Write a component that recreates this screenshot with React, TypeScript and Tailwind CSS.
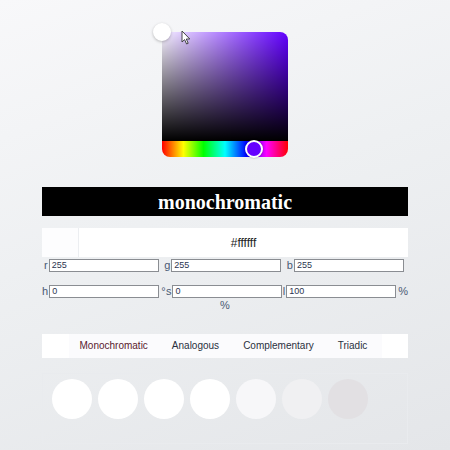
import React from 'react';

const swatches = ['#ffffff', '#ffffff', '#ffffff', '#ffffff', '#f7f7f9', '#f0f0f2', '#e2e0e3'];
const tabs = ['Monochromatic', 'Analogous', 'Complementary', 'Triadic'];

function Field({ label, value, suffix, className }: { label: string; value: string; suffix?: string; className?: string }) {
  return (
    <div className={`flex items-center ${className ?? ''}`}>
      <span className="text-[11px] leading-none text-[#4a5a74]">{label}</span>
      <div className="ml-px h-[13px] w-[110px] border border-[#8a8d92] bg-white px-0.5 text-[9px] leading-[11px] text-[#2b3550]">
        {value}
      </div>
      {suffix && <span className="ml-0.5 text-[11px] leading-none text-[#4a5a74]">{suffix}</span>}
    </div>
  );
}

export default function App() {
  return (
    <div
      className="flex min-h-screen flex-col items-center bg-[linear-gradient(160deg,#f8f8fa_0%,#eef0f2_45%,#e4e6e9_100%)] pt-8"
      style={{ fontFamily: '"Liberation Sans", Arial, sans-serif' }}
    >
      {/* picker */}
      <div className="relative h-[125px] w-[126px]">
        <div className="h-[109px] w-full rounded-t-lg bg-[#6200ff]">
          <div className="h-full w-full rounded-t-lg bg-[linear-gradient(to_right,rgba(255,255,255,0.95),rgba(255,255,255,0))]">
            <div className="h-full w-full rounded-t-lg bg-[linear-gradient(to_bottom,rgba(0,0,0,0)_0%,rgba(0,0,0,0.5)_50%,#000000_100%)]" />
          </div>
        </div>
        <div className="h-4 w-full rounded-b-lg bg-[linear-gradient(to_right,#ff0000_0%,#ffff00_17%,#00ff00_33%,#00ffff_50%,#0000ff_67%,#ff00ff_83%,#ff0000_100%)]" />
        <div className="absolute -left-[9px] -top-[9px] h-[18px] w-[18px] rounded-full border-2 border-white bg-white shadow-[0_1px_3px_rgba(0,0,0,0.25)]" />
        <div className="absolute left-[83px] top-[108px] h-[18px] w-[18px] rounded-full border-2 border-white bg-[#6600ff] shadow-[0_0_2px_rgba(0,0,0,0.4)]" />
        <svg className="absolute left-[19px] top-[-2px]" width="10" height="15" viewBox="0 0 10 15">
          <path d="M1 1 L1 12 L3.6 9.6 L5.6 14 L7.2 13.3 L5.3 9 L8.8 9 Z" fill="#ffffff" stroke="#333" strokeWidth="0.9" strokeLinejoin="round" />
        </svg>
      </div>

      {/* banner */}
      <div className="mt-[30px] flex h-[29px] w-[366px] items-center justify-center bg-black">
        <span className="text-[20px] font-bold leading-none text-white" style={{ fontFamily: '"Liberation Serif", "Times New Roman", serif' }}>
          monochromatic
        </span>
      </div>

      {/* hex */}
      <div className="mt-3 flex h-[29px] w-[366px] bg-white">
        <div className="w-[37px] border-r border-[#eceef1] bg-[#fdfdfe]" />
        <div className="flex flex-1 items-center justify-center text-[12px] text-[#222]">#ffffff</div>
      </div>

      {/* rgb */}
      <div className="mt-[2px] flex w-[366px] items-center justify-between pl-[2px] pr-[4px]">
        <Field label="r" value="255" />
        <Field label="g" value="255" />
        <Field label="b" value="255" />
      </div>

      {/* hsl */}
      <div className="mt-[13px] flex w-[366px] items-center justify-between">
        <Field label="h" value="0" suffix="°" />
        <Field label="s" value="0" />
        <Field label="l" value="100" suffix="%" />
      </div>
      <div className="mt-[2px] text-[11px] leading-none text-[#4a5a74]">%</div>

      {/* tabs */}
      <div className="mt-[23px] flex h-[24px] w-[366px] justify-center bg-white">
        <div className="flex h-full w-[313px] items-center bg-[#fbfbfd] pl-[11px] text-[10px] leading-none">
          {tabs.map((t, i) => (
            <span key={t} className={`${i === 0 ? 'text-[#5a1a2e]' : 'text-[#2a3040]'} ${i === 0 ? '' : 'ml-[24px]'}`}>
              {t}
            </span>
          ))}
        </div>
      </div>

      {/* swatches */}
      <div className="mt-[15px] flex h-[71px] w-[366px] items-start gap-[6px] border border-[#e9ebee] pl-[9px] pt-[5px]">
        {swatches.map((c, i) => (
          <div key={i} className="h-10 w-10 rounded-full" style={{ backgroundColor: c }} />
        ))}
      </div>
    </div>
  );
}
